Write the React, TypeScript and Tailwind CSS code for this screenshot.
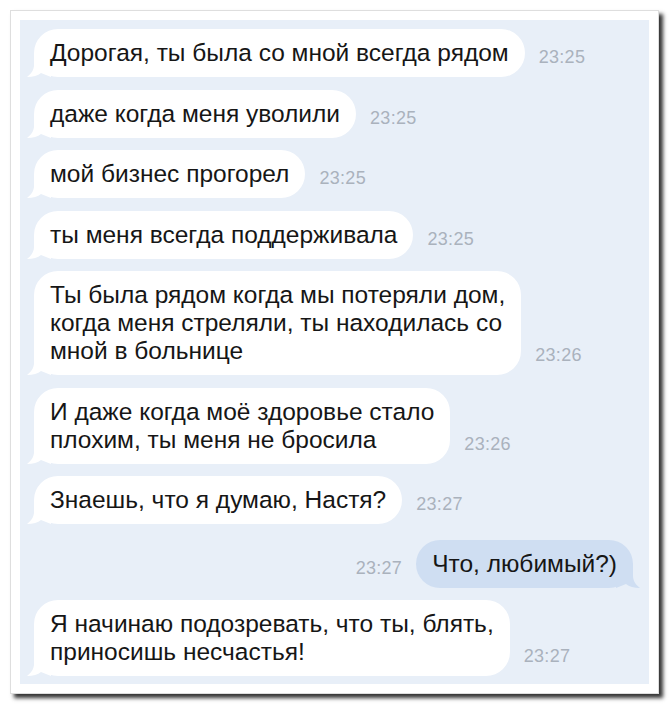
type Msg = {
  lines: string[];
  time: string;
  mine?: boolean;
};

const messages: Msg[] = [
  { lines: ['Дорогая, ты была со мной всегда рядом'], time: '23:25' },
  { lines: ['даже когда меня уволили'], time: '23:25' },
  { lines: ['мой бизнес прогорел'], time: '23:25' },
  { lines: ['ты меня всегда поддерживала'], time: '23:25' },
  {
    lines: ['Ты была рядом когда мы потеряли дом,', 'когда меня стреляли, ты находилась со', 'мной в больнице'],
    time: '23:26',
  },
  { lines: ['И даже когда моё здоровье стало', 'плохим, ты меня не бросила'], time: '23:26' },
  { lines: ['Знаешь, что я думаю, Настя?'], time: '23:27' },
  { lines: ['Что, любимый?)'], time: '23:27', mine: true },
  { lines: ['Я начинаю подозревать, что ты, блять,', 'приносишь несчастья!'], time: '23:27' },
];

const LeftTail = () => (
  <svg className="absolute -left-[7px] bottom-0" width="24" height="24" viewBox="0 0 24 24">
    <path d="M7 0 L7 12 C7 17 4 21 0 24 C6 24 11 22.5 14 20 L24 24 L24 0 Z" fill="#ffffff" />
  </svg>
);

const RightTail = () => (
  <svg className="absolute -right-[7px] bottom-0" width="24" height="24" viewBox="0 0 24 24">
    <path d="M17 0 L17 12 C17 17 20 21 24 24 C18 24 13 22.5 10 20 L0 24 L0 0 Z" fill="#cfdef2" />
  </svg>
);

const Time = ({ value }: { value: string }) => (
  <span className="mb-[11px] text-[18px] leading-none text-[#aab2bd] tracking-[0.3px]">{value}</span>
);

const Bubble = ({ msg }: { msg: Msg }) => {
  return (
    <div className={`flex items-end gap-[14px] ${msg.mine ? 'justify-end mt-[3px]' : ''}`}>
      {msg.mine && <Time value={msg.time} />}
      <div
        className={`relative rounded-[24px] px-[16px] py-[10px] text-[24.5px] leading-[28px] text-[#161616] ${
          msg.mine ? 'bg-[#cfdef2]' : 'bg-white'
        }`}
      >
        {msg.mine ? <RightTail /> : <LeftTail />}
        <div className="relative">
          {msg.lines.map((line) => (
            <div key={line} className="whitespace-nowrap">
              {line}
            </div>
          ))}
        </div>
      </div>
      {!msg.mine && <Time value={msg.time} />}
    </div>
  );
};

export default function App() {
  return (
    <div className="min-h-[706px] w-[670px] bg-white pl-[10px] pt-[10px]" style={{ fontFamily: '"Liberation Sans", Arial, sans-serif' }}>
      <div className="w-[649px] border border-[#dedede] bg-white p-[9px] shadow-[4px_4px_4px_rgba(0,0,0,0.8)]">
        <div className="flex h-[664px] flex-col gap-[12.5px] bg-[#e8eff8] pl-[14px] pr-[16px] pt-[9px]">
          {messages.map((m, i) => (
            <Bubble key={i} msg={m} />
          ))}
        </div>
      </div>
    </div>
  );
}
